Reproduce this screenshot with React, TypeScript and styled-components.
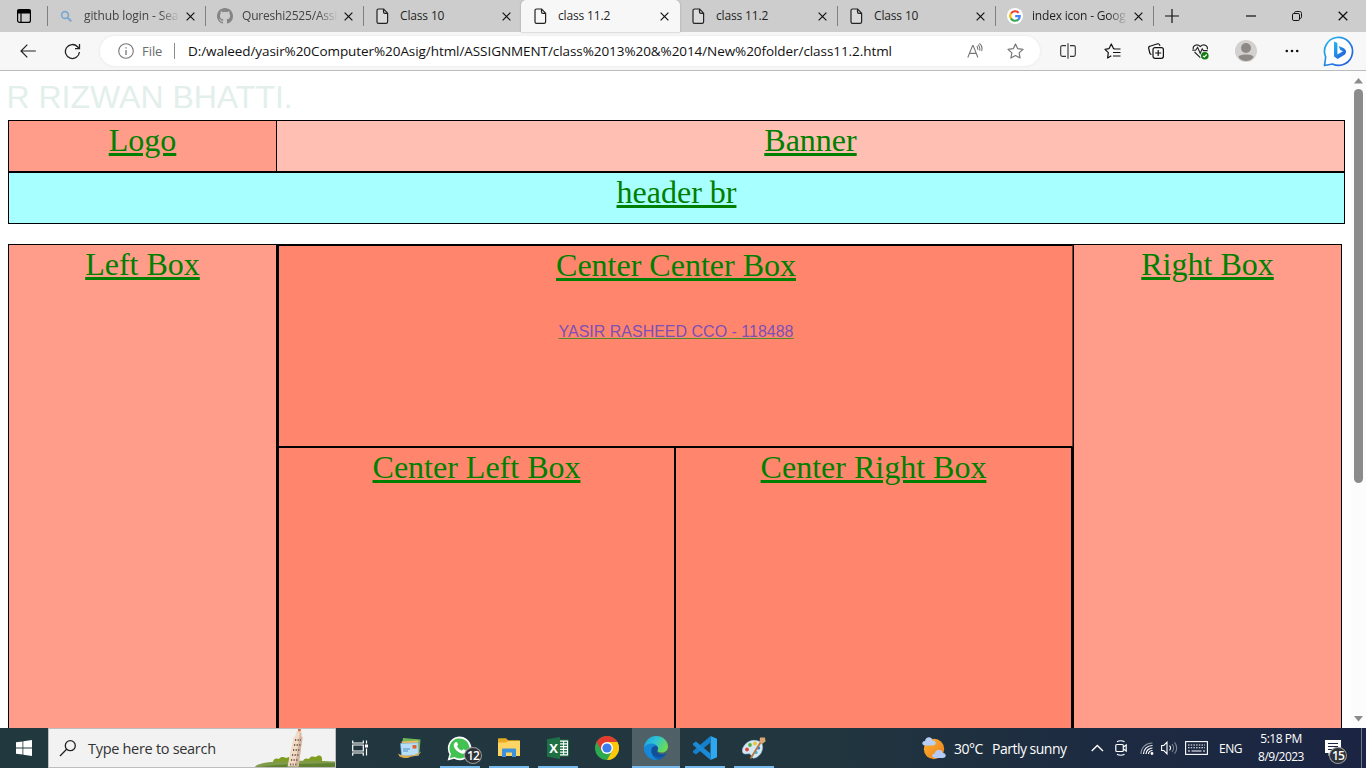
import React from 'react';
import styled, { createGlobalStyle } from 'styled-components';

const GlobalStyle = createGlobalStyle`
  * { box-sizing: border-box; }
  body { margin: 0; background: #fff; overflow: hidden; }
  svg { display: block; flex: none; }
`;

const ui = `"Open Sans", "Noto Sans", sans-serif`;

const Screen = styled.div`
  width: 1366px;
  height: 768px;
  display: flex;
  flex-direction: column;
  overflow: hidden;
`;

/* ---------- tab strip ---------- */

const TabStrip = styled.div`
  height: 32px;
  flex: none;
  display: flex;
  background: #cdcdcd;
  font-family: ${ui};
`;

const TabActions = styled.div<{ $w: number; $pad: number }>`
  width: ${p => p.$w}px;
  padding-left: ${p => p.$pad}px;
  display: flex;
  align-items: center;
`;

const Tab = styled.div<{ $active?: boolean; $line?: boolean }>`
  position: relative;
  width: ${p => (p.$active ? 159 : 158)}px;
  margin-right: ${p => (p.$active ? -1 : 0)}px;
  z-index: ${p => (p.$active ? 1 : 0)};
  flex: none;
  display: flex;
  align-items: center;
  padding: 0 ${p => (p.$active ? 11 : 10)}px 0 11px;
  background: ${p => (p.$active ? '#f7f7f7' : 'transparent')};
  border-radius: ${p => (p.$active ? '5px 5px 0 0' : '0')};
  box-shadow: ${p => (p.$active ? '0 0 2px #999' : 'none')};
  &::before {
    content: '';
    position: absolute;
    left: 0;
    top: 6px;
    width: 1px;
    height: 20px;
    background: ${p => (p.$line ? '#808080' : 'transparent')};
  }
`;

const TabIcon = styled.span`
  width: 17px;
  display: flex;
  justify-content: center;
`;

const TabTitle = styled.span<{ $fade?: boolean; $ls?: number; $soft?: boolean }>`
  width: 97px;
  margin-left: 9px;
  white-space: nowrap;
  font-size: 12px;
  line-height: 18px;
  letter-spacing: ${p => p.$ls ?? -0.15}px;
  color: ${p => (p.$soft ? '#444' : '#1f1f1f')};
  mask-image: ${p => (p.$fade ? 'linear-gradient(90deg, #000 78%, transparent 99%)' : 'none')};
`;

const TabClose = styled.span`
  margin-left: auto;
`;

const Divider = styled.span`
  width: 1px;
  height: 20px;
  margin-top: 6px;
  background: #808080;
`;

const WindowButtons = styled.div`
  margin-left: auto;
  display: flex;
`;

const WindowButton = styled.div`
  width: 46px;
  display: flex;
  align-items: center;
  justify-content: center;
`;

/* ---------- toolbar ---------- */

const Toolbar = styled.div`
  height: 39px;
  flex: none;
  display: flex;
  align-items: center;
  background: #f7f7f7;
  border-bottom: 1px solid #bcbcbc;
  font-family: ${ui};
`;

const NavButton = styled.div<{ $w: number }>`
  width: ${p => p.$w}px;
  display: flex;
  justify-content: center;
`;

const AddressBar = styled.div`
  width: 940px;
  height: 30px;
  margin-left: 6px;
  padding-left: 18px;
  display: flex;
  align-items: center;
  background: #fff;
  border-radius: 15px;
  box-shadow: 0 0 3px #e4e4e4;
`;

const Scheme = styled.span`
  width: 32px;
  margin-left: 8px;
  font-size: 13px;
  letter-spacing: -0.05px;
  color: #6b6b6b;
`;

const SchemeLine = styled.span`
  width: 1px;
  height: 16px;
  background: #8a8a8a;
`;

const Url = styled.span`
  width: 779px;
  margin-left: 13px;
  font-size: 13.5px;
  letter-spacing: -0.07px;
  white-space: nowrap;
  color: #111;
`;

const BarIcons = styled.div`
  display: flex;
  align-items: center;
  gap: 24px;
`;

const ToolIcons = styled.div`
  display: flex;
  align-items: center;
  margin-left: 6px;
`;

const ToolSlot = styled.div<{ $w: number }>`
  width: ${p => p.$w}px;
  display: flex;
  justify-content: center;
`;

/* ---------- web page ---------- */

const Viewport = styled.div`
  flex: 1;
  min-height: 0;
  display: flex;
  overflow: hidden;
  background: #fff;
`;

const Page = styled.div`
  width: 1351px;
  padding-left: 8px;
  overflow: hidden;
  font-family: "Liberation Serif", serif;
`;

const Marquee = styled.div`
  height: 49px;
  margin-left: -1.5px;
  padding-top: 8px;
  font: 32px/37px "Liberation Sans", sans-serif;
  color: #e3efeb;
  white-space: nowrap;
`;

const Row = styled.div`
  display: flex;
`;

const Box = styled.div<{ $w: number; $h: number; $bg: string; $sides?: string }>`
  width: ${p => p.$w}px;
  height: ${p => p.$h}px;
  flex: none;
  padding-top: 1px;
  background: ${p => p.$bg};
  border: 1px solid #000;
  border-width: ${p => p.$sides ?? '1px'};
  text-align: center;
`;

const Main = styled(Row)`
  margin-top: 20px;
`;

const CenterColumn = styled.div`
  width: 797px;
  flex: none;
  border: 1px solid #000;
  border-bottom: 0;
  background: #ff866d;
`;

const TopBox = styled(Box)`
  padding-left: 1px;
  border-right-color: #7a3a2e;
`;

const BoxTitle = styled.div`
  font-size: 32px;
  line-height: 37px;
  color: #008000;
  text-decoration: underline;
  text-decoration-thickness: 3px;
  text-underline-offset: 2px;
`;

const Author = styled.div`
  margin-top: 38px;
  font: 16px/20px "Liberation Sans", sans-serif;
  color: #7c50b4;
  text-decoration: underline 1px #4f8b2c;
  text-decoration-skip-ink: none;
`;

const Scrollbar = styled.div`
  width: 15px;
  display: flex;
  flex-direction: column;
  align-items: center;
  justify-content: space-between;
  padding: 7px 0 6px;
  background: #fcfcfc;
`;

const Thumb = styled.div`
  width: 9px;
  height: 394px;
  margin: 5px 0 auto;
  border-radius: 5px;
  background: #8b8b8b;
`;

/* ---------- taskbar ---------- */

const Taskbar = styled.div`
  height: 40px;
  flex: none;
  display: flex;
  color: #fff;
  background: linear-gradient(90deg, #22383f 0%, #21363f 60%, #1d2b41 80%, #1b2543 100%);
  font-family: ${ui};
`;

const StartButton = styled.div`
  width: 48px;
  display: flex;
  align-items: center;
  justify-content: center;
`;

const Search = styled.div`
  width: 288px;
  display: flex;
  align-items: center;
  padding-left: 10px;
  background: #f2f2f2;
  border: 1px solid #bdbdbd;
  color: #333;
  font-size: 14.5px;
  letter-spacing: -0.3px;
  white-space: nowrap;
`;

const SearchText = styled.span`
  margin-left: 11px;
`;

const Landmark = styled.span`
  margin-left: auto;
  align-self: flex-end;
`;

const AppSlot = styled.div<{ $running?: boolean; $active?: boolean; $w?: number }>`
  position: relative;
  width: ${p => p.$w ?? 49}px;
  display: flex;
  align-items: center;
  justify-content: center;
  &::before {
    content: '';
    position: absolute;
    inset: 0 0 0 1px;
    background: ${p => (p.$active ? 'rgba(255,255,255,.21)' : 'transparent')};
  }
  &::after {
    content: '';
    position: absolute;
    bottom: 0;
    height: 2px;
    left: ${p => (p.$active ? 1 : 5)}px;
    right: ${p => (p.$active ? 0 : 4)}px;
    background: ${p => (p.$running ? '#76b9ed' : 'transparent')};
  }
  svg { position: relative; }
`;

const CountBadge = styled.span<{ $x: number; $y: number }>`
  position: absolute;
  left: ${p => p.$x}px;
  top: ${p => p.$y}px;
  width: 18px;
  height: 17px;
  border: 1px solid #999;
  border-radius: 50%;
  background: #2e3338;
  font-size: 12px;
  line-height: 15px;
  letter-spacing: -0.8px;
  font-weight: 600;
  text-align: center;
`;

const Tray = styled.div`
  margin-left: auto;
  width: 444px;
  display: flex;
  align-items: center;
  white-space: nowrap;
`;

const TrayItem = styled.div<{ $w: number }>`
  position: relative;
  width: ${p => p.$w}px;
  flex: none;
`;

const TrayText = styled(TrayItem)<{ $size?: number; $ls?: number }>`
  font-size: ${p => p.$size ?? 14}px;
  letter-spacing: ${p => p.$ls ?? -0.5}px;
`;

const Clock = styled.div`
  width: 60px;
  flex: none;
  font-size: 12px;
  line-height: 18px;
  letter-spacing: -0.5px;
  text-align: center;
`;

const DesktopEdge = styled.div`
  width: 5px;
  height: 40px;
  margin-left: auto;
  border-left: 1px solid #6d7688;
`;

/* ---------- drawings ---------- */

const CloseIcon = ({ size = 9 }: { size?: number }) => (
  <svg width={size} height={size} viewBox="0 0 10 10" stroke="#111" strokeWidth="1.3" fill="none">
    <path d="M.7.7l8.6 8.6M9.3.7L.7 9.3" />
  </svg>
);

const FileIcon = () => (
  <svg width="13" height="17" viewBox="0 0 13 17" fill="#f7f7f7" fillOpacity=".35" stroke="#222" strokeWidth="1.2">
    <path d="M2.6 1h5l4 4.2v8.6c0 1-.6 1.6-1.6 1.6H2.6C1.6 15.4 1 14.8 1 13.8V2.6C1 1.6 1.6 1 2.6 1zM7.5 1v3c0 1 .4 1.4 1.4 1.4h2.7" />
  </svg>
);

const MagnifierTab = () => (
  <svg width="13" height="13" viewBox="0 0 13 13" fill="none" stroke="#7ba7cf" strokeWidth="1.6">
    <circle cx="5" cy="5" r="3.4" /><path d="M7.6 7.6l3.6 3.6" strokeWidth="2" />
  </svg>
);

const GithubIcon = () => (
  <svg width="16" height="16" viewBox="0 0 16 16" fill="#858585">
    <path d="M8 0C3.58 0 0 3.58 0 8c0 3.54 2.29 6.53 5.47 7.59.4.07.55-.17.55-.38 0-.19-.01-.82-.01-1.49-2.01.37-2.53-.49-2.69-.94-.09-.23-.48-.94-.82-1.13-.28-.15-.68-.52-.01-.53.63-.01 1.08.58 1.23.82.72 1.21 1.87.87 2.33.66.07-.52.28-.87.51-1.07-1.78-.2-3.64-.89-3.64-3.95 0-.87.31-1.59.82-2.15-.08-.2-.36-1.02.08-2.12 0 0 .67-.21 2.2.82a7.6 7.6 0 0 1 4 0c1.53-1.04 2.2-.82 2.2-.82.44 1.1.16 1.92.08 2.12.51.56.82 1.27.82 2.15 0 3.07-1.87 3.75-3.65 3.95.29.25.54.73.54 1.48 0 1.07-.01 1.93-.01 2.2 0 .21.15.46.55.38A8 8 0 0 0 16 8c0-4.42-3.58-8-8-8z" />
  </svg>
);

const GoogleIcon = () => (
  <svg width="16" height="16" viewBox="0 0 16 16" fill="none" strokeWidth="2.1">
    <circle cx="8" cy="8" r="8" fill="#fff" />
    <path d="M11.6 4.9A4.8 4.8 0 0 0 4 5.5" stroke="#ea4335" />
    <path d="M4 5.4a4.8 4.8 0 0 0 0 5.2" stroke="#fbbc05" />
    <path d="M3.9 10.4a4.8 4.8 0 0 0 7.3 1.2" stroke="#34a853" />
    <path d="M11.1 11.6A4.8 4.8 0 0 0 12.8 8.1H8.2" stroke="#4285f4" />
  </svg>
);

const TabMenuIcon = () => (
  <svg width="14" height="14" viewBox="0 0 14 14" fill="none" stroke="#000" strokeWidth="1.2">
    <rect x=".6" y=".6" width="12.8" height="12.8" rx="2" />
    <path d="M1 1h12v3H1z" fill="#000" /><path d="M4 4v9" />
  </svg>
);

const InfoIcon = () => (
  <svg width="16" height="16" viewBox="0 0 16 16" fill="none" stroke="#767676" strokeWidth="1.1">
    <circle cx="8" cy="8" r="7.3" /><path d="M8 7v5M8 4.2v1.4" strokeWidth="1.3" />
  </svg>
);

const BackIcon = () => (
  <svg width="16" height="14" viewBox="0 0 16 14" fill="none" stroke="#222" strokeWidth="1.2">
    <path d="M15.8 7H1M7.3.6L1 7l6.3 6.4" />
  </svg>
);

const ReloadIcon = () => (
  <svg width="17" height="17" viewBox="0 0 17 17" fill="none" stroke="#222" strokeWidth="1.3">
    <path d="M15.4 9a7 7 0 1 1-1.9-5.3l1.6 1.7M15.5 1v4.6H11" />
  </svg>
);

const ReadAloudIcon = () => (
  <svg width="16" height="16" viewBox="0 0 16 16" fill="none" stroke="#777" strokeWidth="1.1">
    <path d="M.8 14.5L5.6 2.5h.5l4.8 12M2.4 10.4h6.9M9.7 3.2c1 1 1.2 2.2 1 3.6M11 1.6c1.8 1.7 2.2 3.8 1.6 6M12.5.4c2.5 2.2 3 4.9 2.1 7.8" />
  </svg>
);

const StarIcon = () => (
  <svg width="17" height="16" viewBox="0 0 17 16" fill="none" stroke="#777" strokeWidth="1.2" strokeLinejoin="round">
    <path d="M8.5 1l2.2 4.7 5.3.7-3.9 3.5 1 5.1-4.6-2.5L3.9 15l1-5.1L1 6.4l5.3-.7z" />
  </svg>
);

const SplitIcon = () => (
  <svg width="16" height="16" viewBox="0 0 16 16" fill="none" stroke="#333" strokeWidth="1.1">
    <path d="M6 2.6H2.3C1.3 2.6.7 3.2.7 4.2v7.6c0 1 .6 1.6 1.6 1.6H6M10 2.6h3.7c1 0 1.6.6 1.6 1.6v7.6c0 1-.6 1.6-1.6 1.6H10M8 .3v15.4" />
  </svg>
);

const FavoritesIcon = () => (
  <svg width="17" height="16" viewBox="0 0 17 16" fill="none" stroke="#111" strokeWidth="1.2" strokeLinejoin="round">
    <path d="M10.600 5.800L9.500 5.600 7.300 1 5.100 5.600 1 6.300l3.300 3.400L3.600 15l3.700-2.200M10 6h6.500M9 9.500h7.500M9 13h7.500" />
  </svg>
);

const CollectionsIcon = () => (
  <svg width="16" height="16" viewBox="0 0 16 16" fill="none" stroke="#111" strokeWidth="1.2">
    <path d="M3.5 11.5C2.5 11.4 2 10.8 1.8 10L.7 5.3C.5 4.2.9 3.5 2 3.2L9.6.8c1.1-.2 1.8.2 2.1 1.3l.3.8" />
    <rect x="5" y="4.6" width="10.4" height="10.7" rx="2" /><path d="M10.2 7v6M7.2 10h6" />
  </svg>
);

const HealthIcon = () => (
  <svg width="17" height="17" viewBox="0 0 17 17" fill="none" stroke="#222" strokeWidth="1.1">
    <path d="M8.300 14.700L2.500 9M1.200 6.300C.6 2.500 5 .2 8.300 3.500 11.600.2 16 2.500 15.400 6.300M.3 7.300h3.400l1.900-3 2.600 6 2-4.500 1.200 1.800h4.200" />
    <circle cx="12.8" cy="12.7" r="3.8" fill="#107c10" stroke="none" />
    <path d="M11 12.8l1.3 1.2 2.4-2.5" stroke="#fff" />
  </svg>
);

const ProfileIcon = () => (
  <svg width="22" height="22" viewBox="0 0 22 22" fill="#8d8987">
    <circle cx="11" cy="11" r="11" fill="#d3d1cf" />
    <circle cx="11" cy="8" r="5" /><path d="M3.500 17c0-3.500 15-3.500 15 0-2.500 5.300-12.500 5.300-15 0z" />
  </svg>
);

const DotsIcon = () => (
  <svg width="14" height="4" viewBox="0 0 14 4" fill="#111">
    <circle cx="1.8" cy="2" r="1.3" /><circle cx="7" cy="2" r="1.3" /><circle cx="12.2" cy="2" r="1.3" />
  </svg>
);

const BingIcon = () => (
  <svg width="32" height="32" viewBox="0 0 32 32">
    <defs>
      <linearGradient id="bing" x1="0" y1="0" x2="1" y2="1">
        <stop offset="0" stopColor="#26b8ef" /><stop offset="1" stopColor="#2454d8" />
      </linearGradient>
    </defs>
    <path d="M1.500 30.500l1.200-8.500A14 14 0 1 1 9.500 29z" fill="#fff" stroke="url(#bing)" strokeWidth="1.700" strokeLinejoin="round" />
    <path d="M11 6.500l3.400 1.500v11.500l5.600-3.200-2.700-1.300-1.700-3.900 4.400 1.600c4 1.700 3.500 5.700 1.500 7L14.600 24 11 21.500z" fill="url(#bing)" />
  </svg>
);

const WindowsIcon = () => (
  <svg width="16" height="16" viewBox="0 0 16 16" fill="#fff">
    <path d="M0 2.3l6.5-.9v6.1H0zM7.3 1.3L16 0v7.500H7.3zM0 8.400h6.500v6.200L0 13.700zM7.300 8.400H16V16l-8.700-1.300z" />
  </svg>
);

const SearchIcon = () => (
  <svg width="18" height="18" viewBox="0 0 18 18" fill="none" stroke="#222" strokeWidth="1.3">
    <circle cx="11.3" cy="6.7" r="5" /><path d="M7.6 10.3L1 17" />
  </svg>
);

const TowerArt = () => (
  <svg width="80" height="38" viewBox="0 0 80 38">
    <path d="M18 34c0-5 4-5 6-4 2-3 5-2 7-1l3-1v6zM48 32c1-3 4-3 6-2 2-4 5-2 7-2 3-3 7-1 6 4z" fill="#7f9e21" />
    <path d="M0 38c2-4 16-5.500 34-6 16-.5 32-.5 46 .5V38z" fill="#7f9b4a" />
    <path d="M6 38c18-3.500 52-3 74-4v4z" fill="#5f8230" />
    <path d="M41 4h5.600l-.4 3.500 1.400.5-4 29.500H32.500L38.600 8l1.700-.7z" fill="#f0dcc6" />
    <path d="M44.800 4h1.800l-.4 3.500 1.400.5-4 29.500H40z" fill="#d3b5a0" />
    <path d="M40 11h6M39 16h6.500M38 21h7M37 26h7M36 31h7.500M35 35.500h7" stroke="#7d6257" strokeWidth="2" strokeDasharray="1.200 1.400" />
    <path d="M43 0h2.800v2.600H43z" fill="#d86d45" /><path d="M41.600 2.400h4.800V4h-4.800z" fill="#ead0b8" />
  </svg>
);

const TaskViewIcon = () => (
  <svg width="17" height="16" viewBox="0 0 17 16" fill="none" stroke="#fff" strokeWidth="1.2">
    <path d="M.7.5V3h10.6V.5M.7 15.7V13h10.6v2.7M.7 5h10.6v6H.7zM14.500 .5v3M14.500 8.500v7" />
    <path d="M13 4.500h3v3h-3z" fill="#fff" stroke="none" />
  </svg>
);

const MailAppIcon = () => (
  <svg width="24" height="22" viewBox="0 0 24 22">
    <path d="M5 1l17.500 1.500L21.500 15 3 13z" fill="#70b85b" />
    <path d="M3.500 4.500l16.500-1 1 13-16 1z" fill="#f1ba5c" />
    <path d="M2.500 6.500L20 5.800l.6 12.600-17 .8z" fill="#b9dff7" stroke="#69aadd" strokeWidth=".6" />
    <path d="M5 12h7M5 14h5" stroke="#4c8fc4" /><path d="M14.500 8h4v3.600h-4z" fill="#e06432" />
    <path d="M0 16.500c6 3.500 17 3 23-2-2 5-7 4.500-10 5.200C9 22 4 21 1.500 19.500z" fill="#dda84e" />
  </svg>
);

const WhatsAppIcon = () => (
  <svg width="25" height="25" viewBox="0 0 25 25">
    <path d="M.6 24.4l1.800-6.200A11.800 11.800 0 1 1 7 22.700z" fill="#fff" />
    <path d="M2.700 22.200l1.300-4.400a10 10 0 1 1 3.500 3.300z" fill="#43c254" />
    <path d="M8.200 6.400c1-.8 1.700-.6 2 .2l.8 2c.2.7-1.200 1.500-.9 2 1.100 2 2.500 3.200 4.500 4 .6.2 1.200-1.600 1.900-1.300l2.100 1c.7.4.4 1.600-.2 2.400-2 2-5 .9-7.600-1.100-2.400-2-4-4.300-4.100-6.200 0-1.100.6-2.300 1.500-3z" fill="#fff" />
  </svg>
);

const ExplorerIcon = () => (
  <svg width="22" height="20" viewBox="0 0 22 20">
    <path d="M0 1.500C0 .7.4.3 1 .3h7l2 2h11c.6 0 1 .3 1 1V18H0z" fill="#e8a922" />
    <path d="M0 4.500h8l2-1.600h12V18H0z" fill="#fed464" />
    <path d="M4 19v-7.200c0-.7.5-1.200 1.200-1.200h11.600c.7 0 1.200.5 1.200 1.200V19h-4v-4.400H8V19z" fill="#3b91dc" />
  </svg>
);

const XGlyph = styled.text`
  font: 700 13px "Open Sans", sans-serif;
  fill: #fff;
`;

const ExcelIcon = () => (
  <svg width="22" height="22" viewBox="0 0 22 22">
    <path d="M11 3h10.500v16H11z" fill="#fff" stroke="#217346" />
    <path d="M13 5.500h7M13 8.300h7M13 11h7M13 13.700h7M13 16.500h7" stroke="#217346" strokeWidth="1.500" /><path d="M16.600 4v14" stroke="#fff" />
    <path d="M0 2.300L13 0v22L0 19.700z" fill="#1e7145" />
    <XGlyph x="2.200" y="15.700">X</XGlyph>
  </svg>
);

const ChromeIcon = () => (
  <svg width="24" height="24" viewBox="0 0 24 24">
    <circle cx="12" cy="12" r="12" fill="#2da94f" />
    <path d="M1.600 6A12 12 0 0 1 22.400 6H12l-5.200 9z" fill="#e33b2e" />
    <path d="M22.400 6A12 12 0 0 1 12 24l5.200-9L12 6z" fill="#fdc70c" />
    <circle cx="12" cy="12" r="6" fill="#fff" /><circle cx="12" cy="12" r="4.600" fill="#3b7ded" />
  </svg>
);

const EdgeIcon = () => (
  <svg width="24" height="24" viewBox="0 0 24 24">
    <defs>
      <linearGradient id="edgeTop" x1="0" y1="0" x2="1" y2=".5">
        <stop offset="0" stopColor="#1b9de2" /><stop offset=".5" stopColor="#2ec3d5" /><stop offset="1" stopColor="#68db55" />
      </linearGradient>
      <linearGradient id="edgeBody" x1="0" y1="0" x2="1" y2="1">
        <stop offset="0" stopColor="#1c9ae8" /><stop offset="1" stopColor="#0b55a5" />
      </linearGradient>
    </defs>
    <path d="M0 12C0 7 5 6.500 9 7c4 .6 5 3 5 5 0 1.500-2 3-.5 4.500 2 2 6 2 9 .7C20.500 21.500 16.500 24 12 24 5.400 24 0 18.600 0 12z" fill="url(#edgeBody)" />
    <path d="M8.500 9.500C5.500 13 7 22 14 23.800 9 25 1.500 21 .2 14 .2 9 6 7.500 8.500 9.500z" fill="#1788d8" />
    <path d="M8.300 11.500c-2.500 4 0 9 5 9.800 3.500.5 7-.9 9-3.700-3 1.300-7 1.100-8.800-1.100-1.200-1.500.7-2.500.5-4.500-.3-2.300-3.700-3-5.700-.5z" fill="#114f98" />
    <path d="M.2 11C1 4.500 6 0 12 0c7 0 12 5 12 10.500 0 3.500-2.500 6-6 6-2.500 0-4.500-.7-4.500-1.500s1-1.300.5-3.500C13 7 3.500 5.500.2 11z" fill="url(#edgeTop)" />
  </svg>
);

const CodeIcon = () => (
  <svg width="24" height="24" viewBox="0 0 24 24">
    <path d="M17.500 0L24 2.800v18.400L17.500 24z" fill="#2fa8f2" />
    <path d="M17.500 0v6.500L3 18.400 0 16.600v-1.700z" fill="#1580cc" />
    <path d="M17.500 24v-6.500L3 5.600 0 7.400v1.700z" fill="#1b8ad6" />
  </svg>
);

const PaintIcon = () => (
  <svg width="24" height="24" viewBox="0 0 24 24">
    <path d="M2 10C6 3 17 2.500 20 8c2 5-1 12-7 14-4 1-3-3-5-4-2-.8-5 1-7-1-1.500-2-.5-5 1-7z" fill="#d3e8f5" stroke="#9bbfd8" strokeWidth=".5" />
    <circle cx="5" cy="13.500" r="1.900" fill="#dc473c" /><circle cx="8" cy="9" r="1.900" fill="#57ad42" />
    <circle cx="13" cy="7.500" r="1.900" fill="#f2c230" /><circle cx="16.500" cy="12" r="1.700" fill="#3d85cf" /><circle cx="14" cy="16.500" r="1.700" fill="#48b4d2" />
    <path d="M19.500 5L8.500 22.500" stroke="#b97136" strokeWidth="1.700" /><path d="M18 1.500l5 0 .5 4L20 8l-2.500-2z" fill="#dca470" />
  </svg>
);

const WeatherIcon = () => (
  <svg width="24" height="23" viewBox="0 0 24 23">
    <defs><linearGradient id="sun" x1="0" y1="0" x2="1" y2="1"><stop offset="0" stopColor="#fdb42b" /><stop offset="1" stopColor="#ed7d20" /></linearGradient></defs>
    <circle cx="12" cy="12" r="10.200" fill="url(#sun)" />
    <path d="M3 8.500C-.5 8.500-.7 4 3 4c.5-5 7-5 7.500-.5 4-.5 4.500 5 .5 5z" fill="#b9d0f5" />
    <path d="M13 21c-4 0-3.500-4.500-.3-4.500.5-5 7.500-5 8-.5 4 0 4 5 0 5z" fill="#b3cbf5" />
  </svg>
);

const ChevronIcon = () => (
  <svg width="13" height="8" viewBox="0 0 13 8" fill="none" stroke="#fff" strokeWidth="1.400"><path d="M.7 7l5.600-5.600L12 7" /></svg>
);

const MeetIcon = () => (
  <svg width="12" height="16" viewBox="0 0 12 16" fill="none" stroke="#fff" strokeWidth="1.200">
    <rect x=".8" y="4.500" width="7.500" height="7" rx="1" /><path d="M8.500 7l2.700-2v6L8.500 9M2 1.800c2-1.300 5.500-1.300 7.500 0M2 14.200c2 1.300 5.500 1.300 7.500 0" />
  </svg>
);

const WifiIcon = () => (
  <svg width="14" height="14" viewBox="0 0 14 14" fill="none" stroke="#fff" strokeWidth="1.200">
    <path d="M1 13C1 6.500 6 2 12.500 2" opacity=".5" /><path d="M3.500 13c0-5 4-8.500 9-8.500M6 13c0-3.500 3-6 6.500-6M8.500 13c0-2 2-3.500 4-3.500" />
    <circle cx="12" cy="12.500" r="1.400" fill="#fff" stroke="none" />
  </svg>
);

const SoundIcon = () => (
  <svg width="17" height="14" viewBox="0 0 17 14" fill="none" stroke="#fff" strokeWidth="1.100">
    <path d="M.6 4.500h2.200L6 1.200v11.600L2.800 9.500H.6zM8.500 4.700c1.200 1.300 1.200 3.300 0 4.600" />
    <path d="M11 3c2 2.300 2 5.700 0 8M13.500 1.300c2.900 3.300 2.900 8.100 0 11.400" opacity=".45" />
  </svg>
);

const KeyboardIcon = () => (
  <svg width="23" height="14" viewBox="0 0 23 14" fill="none" stroke="#fff" strokeWidth="1.100">
    <rect x=".6" y=".6" width="21.800" height="12.800" /><path d="M3 4h17M3 6.800h17" strokeDasharray="1.500 1.200" /><path d="M3 10h2M6.500 10h10M18 10h2" />
  </svg>
);

const NoticeIcon = () => (
  <svg width="16" height="16" viewBox="0 0 16 16">
    <path d="M0 0h16v13H6.500L3.500 16v-3H0z" fill="#fff" /><path d="M3 3.500h10M3 6.500h10M3 9.500h7" stroke="#1c2742" strokeWidth="1.200" />
  </svg>
);

interface TabData { title: string; icon: React.ReactNode; active?: boolean; fade?: boolean; soft?: boolean; line?: boolean; ls?: number }

const tabs: TabData[] = [
  { title: 'github login - Sea', icon: <MagnifierTab />, fade: true, soft: true, line: true, ls: -0.1 },
  { title: 'Qureshi2525/Assi', icon: <GithubIcon />, fade: true, soft: true, line: true, ls: -0.2 },
  { title: 'Class 10', icon: <FileIcon />, line: true },
  { title: 'class 11.2', icon: <FileIcon />, active: true },
  { title: 'class 11.2', icon: <FileIcon /> },
  { title: 'Class 10', icon: <FileIcon />, line: true },
  { title: 'index icon - Goog', icon: <GoogleIcon />, fade: true, line: true, ls: -0.2 },
];

export default function App() {
  return (
    <Screen>
      <GlobalStyle />
      <TabStrip>
        <TabActions $w={47} $pad={17}><TabMenuIcon /></TabActions>
        {tabs.map((t, i) => (
          <Tab key={i} $active={t.active} $line={t.line}>
            <TabIcon>{t.icon}</TabIcon>
            <TabTitle $fade={t.fade} $soft={t.soft} $ls={t.ls}>{t.title}</TabTitle>
            <TabClose><CloseIcon /></TabClose>
          </Tab>
        ))}
        <Divider />
        <TabActions $w={40} $pad={11}>
          <svg width="14" height="14" viewBox="0 0 14 14" stroke="#111" strokeWidth="1.2"><path d="M7 0v14M0 7h14" /></svg>
        </TabActions>
        <WindowButtons>
          <WindowButton><svg width="10" height="2"><path d="M0 1h10" stroke="#111" strokeWidth="1.2" /></svg></WindowButton>
          <WindowButton>
            <svg width="10" height="10" viewBox="0 0 10 10" fill="none" stroke="#111">
              <rect x=".5" y="2.500" width="7" height="7" rx="1.300" /><path d="M2.500 2.300C2.500 1 3 .5 4.200.5h3.300c1.300 0 2 .7 2 2v3.300c0 1.200-.5 1.700-1.800 1.700" />
            </svg>
          </WindowButton>
          <WindowButton><CloseIcon size={10} /></WindowButton>
        </WindowButtons>
      </TabStrip>

      <Toolbar>
        <NavButton $w={56}><BackIcon /></NavButton>
        <NavButton $w={32}><ReloadIcon /></NavButton>
        <NavButton $w={6} />
        <AddressBar>
          <InfoIcon />
          <Scheme>File</Scheme>
          <SchemeLine />
          <Url>D:/waleed/yasir%20Computer%20Asig/html/ASSIGNMENT/class%2013%20&amp;%2014/New%20folder/class11.2.html</Url>
          <BarIcons><ReadAloudIcon /><StarIcon /></BarIcons>
        </AddressBar>
        <ToolIcons>
          <ToolSlot $w={44}><SplitIcon /></ToolSlot>
          <ToolSlot $w={44}><FavoritesIcon /></ToolSlot>
          <ToolSlot $w={44}><CollectionsIcon /></ToolSlot>
          <ToolSlot $w={44}><HealthIcon /></ToolSlot>
          <ToolSlot $w={47}><ProfileIcon /></ToolSlot>
          <ToolSlot $w={45}><DotsIcon /></ToolSlot>
          <ToolSlot $w={49}><BingIcon /></ToolSlot>
        </ToolIcons>
      </Toolbar>

      <Viewport>
        <Page>
          <Marquee>R RIZWAN BHATTI.</Marquee>
          <Row>
            <Box $w={269} $h={52} $bg="#ff9c8a"><BoxTitle>Logo</BoxTitle></Box>
            <Box $w={1068} $h={52} $bg="#ffbfb2" $sides="1px 1px 1px 0"><BoxTitle>Banner</BoxTitle></Box>
          </Row>
          <Box $w={1337} $h={52} $bg="#a8ffff"><BoxTitle>header br</BoxTitle></Box>
          <Main>
            <Box $w={269} $h={600} $bg="#ff9c8a"><BoxTitle>Left Box</BoxTitle></Box>
            <CenterColumn>
              <TopBox $w={795} $h={202} $bg="#ff866d">
                <BoxTitle>Center Center Box</BoxTitle>
                <Author>YASIR RASHEED CCO - 118488</Author>
              </TopBox>
              <Row>
                <Box $w={397} $h={400} $bg="#ff866d"><BoxTitle>Center Left Box</BoxTitle></Box>
                <Box $w={398} $h={400} $bg="#ff866d" $sides="1px 2px 1px 1px"><BoxTitle>Center Right Box</BoxTitle></Box>
              </Row>
            </CenterColumn>
            <Box $w={268} $h={600} $bg="#ff9c8a" $sides="1px 1px 1px 0"><BoxTitle>Right Box</BoxTitle></Box>
          </Main>
        </Page>
        <Scrollbar>
          <svg width="9" height="6"><path d="M4.500 0L9 5.500H0z" fill="#8b8b8b" /></svg>
          <Thumb />
          <svg width="9" height="6"><path d="M4.500 5.500L9 0H0z" fill="#8b8b8b" /></svg>
        </Scrollbar>
      </Viewport>

      <Taskbar>
        <StartButton><WindowsIcon /></StartButton>
        <Search>
          <SearchIcon />
          <SearchText>Type here to search</SearchText>
          <Landmark><TowerArt /></Landmark>
        </Search>
        <AppSlot $w={48}><TaskViewIcon /></AppSlot>
        <AppSlot $w={51}><MailAppIcon /></AppSlot>
        <AppSlot $running><WhatsAppIcon /><CountBadge $x={29} $y={19}>12</CountBadge></AppSlot>
        <AppSlot $running><ExplorerIcon /></AppSlot>
        <AppSlot $running><ExcelIcon /></AppSlot>
        <AppSlot><ChromeIcon /></AppSlot>
        <AppSlot $running $active><EdgeIcon /></AppSlot>
        <AppSlot $running><CodeIcon /></AppSlot>
        <AppSlot $running><PaintIcon /></AppSlot>
        <Tray>
          <TrayItem $w={32}><WeatherIcon /></TrayItem>
          <TrayText $w={38}>30°C</TrayText>
          <TrayText $w={99}>Partly sunny</TrayText>
          <TrayItem $w={24}><ChevronIcon /></TrayItem>
          <TrayItem $w={25}><MeetIcon /></TrayItem>
          <TrayItem $w={21}><WifiIcon /></TrayItem>
          <TrayItem $w={24}><SoundIcon /></TrayItem>
          <TrayItem $w={34}><KeyboardIcon /></TrayItem>
          <TrayText $w={32} $size={12}>ENG</TrayText>
          <Clock>5:18 PM<br />8/9/2023</Clock>
          <TrayItem $w={30} style={undefined}>
            <NoticeSlot><NoticeIcon /></NoticeSlot>
            <CountBadge $x={18} $y={7}>15</CountBadge>
          </TrayItem>
          <DesktopEdge />
        </Tray>
      </Taskbar>
    </Screen>
  );
}

const NoticeSlot = styled.div`
  padding-left: 14px;
`;
